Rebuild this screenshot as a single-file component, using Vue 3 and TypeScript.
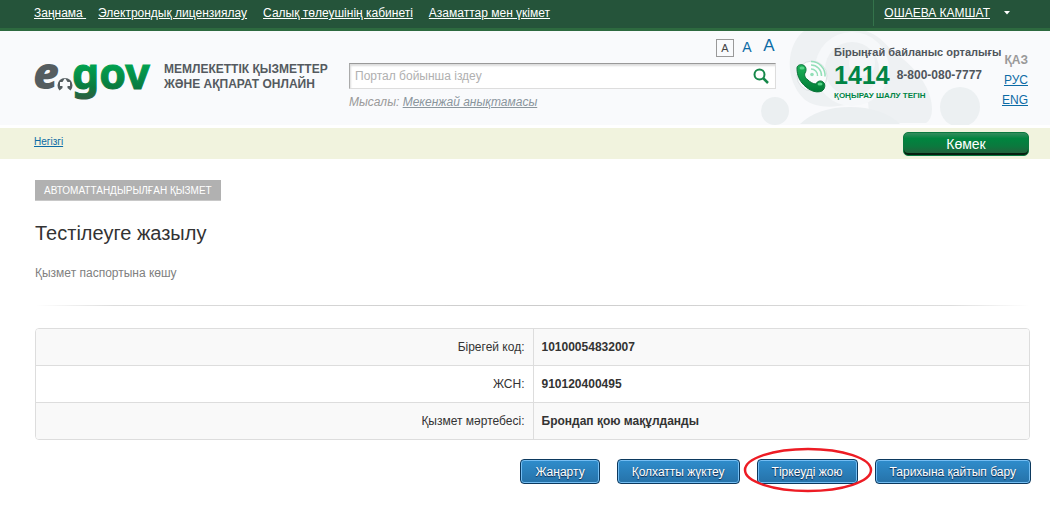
<script setup lang="ts">
import { ref } from 'vue'

interface Row { label: string; value: string }

const links: string[] = ['Заңнама ', 'Электрондық лицензиялау', 'Салық төлеушінің кабинеті', 'Азаматтар мен үкімет']
const rows: Row[] = [
  { label: 'Бірегей код:', value: '10100054832007' },
  { label: 'ЖСН:', value: '910120400495' },
  { label: 'Қызмет мәртебесі:', value: 'Брондап қою мақұлданды' },
]
const query = ref('')
</script>

<template>
  <div class="page">
    <nav class="topbar">
      <a v-for="l in links" :key="l" href="#">{{ l }}</a>
      <div class="user">
        <a href="#">ОШАЕВА КАМШАТ</a>
        <button type="button" class="caret" aria-label="Мәзір"><svg width="6" height="4" viewBox="0 0 6 4"><path d="M0 0h6L3 3.5z" fill="#fff" /></svg></button>
      </div>
    </nav>

    <header class="header">
      <svg class="ornament" width="240" height="94" viewBox="0 0 240 94" aria-hidden="true">
        <path d="M54 0C36 14 34 48 54 68C66 78 84 76 96 74L160 66C156 34 136 6 116 0Z" fill="#eef1f3" />
        <path d="M112 8C150 16 182 50 182 78Q182 88 176 92H120Z" fill="#eef1f3" />
        <circle cx="102" cy="38" r="37" fill="#f6f8fa" />
        <circle cx="102" cy="38" r="27" fill="#edf0f2" />
        <circle cx="112" cy="32" r="13" fill="#f4f6f8" />
        <path d="M50 93Q68 76 100 76Q132 76 150 93Z" fill="#ebeff1" />
        <circle cx="25" cy="80" r="14" fill="#ebeff1" />
        <circle cx="210" cy="76" r="20" fill="#ecf0f2" />
      </svg>

      <a class="brand" href="#">
        <svg class="logo" width="118" height="48" viewBox="0 0 118 48" role="img" aria-label="e.gov">
          <defs>
            <linearGradient id="gov" gradientUnits="userSpaceOnUse" x1="0" y1="8" x2="0" y2="43">
              <stop offset="0" stop-color="#00a551" /><stop offset="0.7" stop-color="#0a7a3f" /><stop offset="1" stop-color="#2d6040" />
            </linearGradient>
          </defs>
          <text class="logo-e" x="-1" y="34">e</text>
          <path d="M25.500 35.500A7.500 7.500 0 1 1 36.500 35.500L33.500 33V31H36V27H33.500L31 23L28.500 27H26V31H28.500V33Z" fill="#555d60" />
          <text class="logo-gov" x="38" y="34" fill="url(#gov)" stroke="url(#gov)">gov</text>
        </svg>
        <span class="slogan">МЕМЛЕКЕТТІК ҚЫЗМЕТТЕР<br>ЖӘНЕ АҚПАРАТ ОНЛАЙН</span>
      </a>

      <form class="search" @submit.prevent>
        <div class="sizes">
          <button type="button" class="size small">A</button>
          <button type="button" class="size medium">A</button>
          <button type="button" class="size large">A</button>
        </div>
        <div class="field">
          <input v-model="query" type="text" placeholder="Портал бойынша іздеу" aria-label="Портал бойынша іздеу">
          <button type="submit" class="go" aria-label="Іздеу">
            <svg width="16" height="16" viewBox="0 0 16 16" fill="none" stroke="#16884a"><circle cx="6.500" cy="6.500" r="5" stroke-width="2" /><path d="M10 10l5 5" stroke-width="2.500" /></svg>
          </button>
        </div>
        <p class="example">Мысалы: <a href="#">Мекенжай анықтамасы</a></p>
      </form>

      <div class="contact">
        <svg class="phone" width="33" height="34" viewBox="0 0 33 34" aria-hidden="true">
          <defs>
            <linearGradient id="ph" x1="0" y1="0" x2="0" y2="1"><stop offset="0" stop-color="#1fb35a" /><stop offset="1" stop-color="#007a35" /></linearGradient>
          </defs>
          <circle cx="16" cy="16" r="15" fill="#fbfcfd" stroke="#dde2e4" />
          <g fill="none" stroke="#93dfb8" stroke-width="1.500">
            <path d="M15 9a6.500 6.500 0 0 1 6.500 7" /><path d="M15 5a10.500 10.500 0 0 1 10.500 11" /><path d="M15 1.500a14 14 0 0 1 14 15" />
          </g>
          <circle cx="16" cy="14.500" r="1.800" fill="#93dfb8" />
          <path d="M1 8C1 5 5 4 7 5C10 6 11 10 9 13C8 15 9 18 12 20C14 22 17 24 20 24C21 21 25 20 27 22C30 24 29 29 26 31C19 34 11 29 6 23C2 18 1 13 1 8Z" fill="url(#ph)" stroke="#087237" />
          <ellipse cx="6" cy="8" rx="2.500" ry="1.500" fill="#58d488" />
          <ellipse cx="24" cy="24" rx="2.500" ry="1.500" fill="#58d488" />
        </svg>
        <div class="lines">
          <strong class="center">Бірыңғай байланыс орталығы</strong>
          <div class="numbers"><strong class="short">1414</strong><strong class="full">8-800-080-7777</strong></div>
          <strong class="free">ҚОҢЫРАУ ШАЛУ ТЕГІН</strong>
        </div>
      </div>
      <div class="langs">
        <strong>ҚАЗ</strong>
        <a href="#">РУС</a>
        <a href="#">ENG</a>
      </div>
    </header>

    <div class="crumbs">
      <a href="#">Негізгі</a>
      <button type="button" class="help">Көмек</button>
    </div>

    <main class="content">
      <span class="tag">АВТОМАТТАНДЫРЫЛҒАН ҚЫЗМЕТ</span>
      <h1>Тестілеуге жазылу</h1>
      <a class="passport" href="#">Қызмет паспортына көшу</a>
      <div class="rule"></div>
      <table class="info">
        <tbody>
          <tr v-for="r in rows" :key="r.label">
            <th scope="row">{{ r.label }}</th>
            <td>{{ r.value }}</td>
          </tr>
        </tbody>
      </table>
      <div class="actions">
        <button type="button">Жаңарту</button>
        <button type="button">Қолхатты жүктеу</button>
        <span class="marked">
          <button type="button">Тіркеуді жою</button>
          <svg class="ring" width="130" height="46" viewBox="0 0 130 46" aria-hidden="true"><ellipse cx="65" cy="23" rx="63" ry="21" fill="none" stroke="#ed1c24" stroke-width="2.500" /></svg>
        </span>
        <button type="button">Тарихына қайтып бару</button>
      </div>
    </main>
  </div>
</template>

<style>
body { margin: 0; background: #fff; }
</style>

<style scoped>
.page { font-family: "Liberation Sans", Arial, sans-serif; font-size: 12px; line-height: 16px; color: #333; }
.page *, .page { box-sizing: border-box; }
button, input { font-family: inherit; margin: 0; }
button { cursor: pointer; }

.topbar { display: flex; height: 31px; padding: 5px 40px 0 34px; gap: 16px; background: #25543a; border-bottom: 3px solid #2d6a3f; }
.topbar a { color: #fff; white-space: pre; }
.topbar > a:first-child { margin-right: -4px; }
.user { display: flex; margin-left: auto; margin-top: -5px; padding: 5px 0 0 10px; height: 26px; border-left: 1px solid #34734b; }
.caret { display: flex; align-items: center; padding: 0; margin-left: 14px; border: 0; background: none; height: 16px; }

.header { position: relative; display: flex; height: 94px; padding: 0 22px 0 34px; background: #f9fafc; }
.ornament { position: absolute; right: 60px; top: 0; }
.brand { display: flex; flex: none; width: 315px; padding-top: 24px; color: #555a60; text-decoration: none; }
.logo { flex: none; overflow: visible; }
.logo-e { font-family: "Open Sans", sans-serif; font-weight: 800; font-size: 45px; font-style: italic; fill: #555d60; }
.logo-gov { font-family: "Noto Sans", sans-serif; font-weight: 700; font-size: 43px; stroke-width: 1; }
.slogan { margin: 7px 0 0 12px; font-weight: 700; line-height: 15px; white-space: nowrap; }

.search { flex: 1; position: relative; padding-top: 6px; }
.sizes { display: flex; justify-content: flex-end; gap: 4px; height: 26px; margin-right: -2px; align-items: flex-start; }
.size { padding: 0; width: 18px; height: 18px; border: 0; background: none; color: #0c6ba5; text-align: center; }
.small { margin-top: 2px; border: 1px solid #999; color: #444; font-size: 11px; line-height: 14px; }
.medium { font-size: 14px; line-height: 20px; }
.large { font-size: 17px; line-height: 18px; }
.field { display: flex; align-items: center; height: 26px; border: 1px solid #ddd; border-top-color: #999; border-left-color: #aaa; background: #fff; box-shadow: inset 1px 2px 2px #ddd; }
.field input { flex: 1; min-width: 0; border: 0; outline: 0; padding: 0 5px; font-size: 12px; background: none; }
.field input::placeholder { color: #b0b0b0; opacity: 1; }
.go { display: flex; padding: 0; margin-right: 6px; border: 0; background: none; }
.example { margin: 5px 0 0; font-style: italic; color: #999; }
.example a { color: #8a959c; }

.contact { position: relative; display: flex; flex: none; margin-left: 20px; padding-top: 13px; width: 207px; }
.phone { margin: 16px 5px 0 0; flex: none; }
.lines { display: flex; flex-direction: column; white-space: nowrap; }
.center { font-size: 11px; color: #50565c; line-height: 16px; }
.numbers { display: flex; gap: 7px; height: 30px; align-items: center; }
.short { font-size: 25px; line-height: 30px; color: #008444; }
.full { color: #50565c; }
.free { font-size: 8px; line-height: 12px; color: #008444; }
.langs { position: relative; display: flex; flex: none; flex-direction: column; align-items: flex-end; width: 25px; padding-top: 19px; line-height: 20px; }
.langs strong { color: #999; }
.langs a { color: #0c6ba5; }

.crumbs { display: flex; justify-content: space-between; margin-top: 3px; height: 31px; padding: 4px 21px 0 34px; background: #f1f3de; }
.crumbs a { margin-top: 2px; font-size: 10px; color: #0c6ba5; }
.help { width: 126px; height: 24px; padding: 0; border: 1px solid #0b7a3f; border-radius: 5px; color: #fff; font-size: 14px; background: linear-gradient(#358c5e, #00853f 25%, #0b793e 60%, #285d3b); box-shadow: inset 0 -2px 0 #06200f; }

.content { padding: 21px 20px 22px 35px; }
.tag { display: block; width: fit-content; padding: 3px 9px 1px; background: #b1b1b1; border-bottom: 1px solid #c8c8c8; color: #fff; font-size: 10px; }
h1 { margin: 20px 0 0; font-size: 20px; line-height: 24px; font-weight: 400; }
.passport { display: block; width: fit-content; margin-top: 20px; color: #808080; text-decoration: none; }
.rule { height: 1px; margin: 24px 0 22px; background: linear-gradient(90deg, #fff, #ddd 8%, #ccc 50%, #ddd 92%, #fff); }
.info { width: 100%; table-layout: fixed; border: 1px solid #ddd; border-radius: 4px; border-collapse: separate; border-spacing: 0; overflow: hidden; }
.info th, .info td { height: 37px; padding: 0 8px; border-bottom: 1px solid #ddd; }
.info tr:last-child > * { height: 36px; border-bottom: 0; }
.info th { font-weight: 400; text-align: right; }
.info td { font-weight: 700; border-left: 1px solid #ddd; }
.info tr:nth-child(odd) { background: #f9f9f9; }
.actions { display: flex; justify-content: flex-end; gap: 17px; margin: 19px -1px 0 0; }
.actions button { height: 25px; padding: 0 14px; border: 1px solid #0c395e; border-radius: 4px; font-size: 12px; color: #fff; text-shadow: 0 1px 1px #124; background: linear-gradient(#2f8dcc, #2672a9); box-shadow: inset 0 0 0 1px #74bdf2; white-space: nowrap; }
.marked { position: relative; display: flex; }
.ring { position: absolute; left: -14px; top: -12px; pointer-events: none; }
</style>
